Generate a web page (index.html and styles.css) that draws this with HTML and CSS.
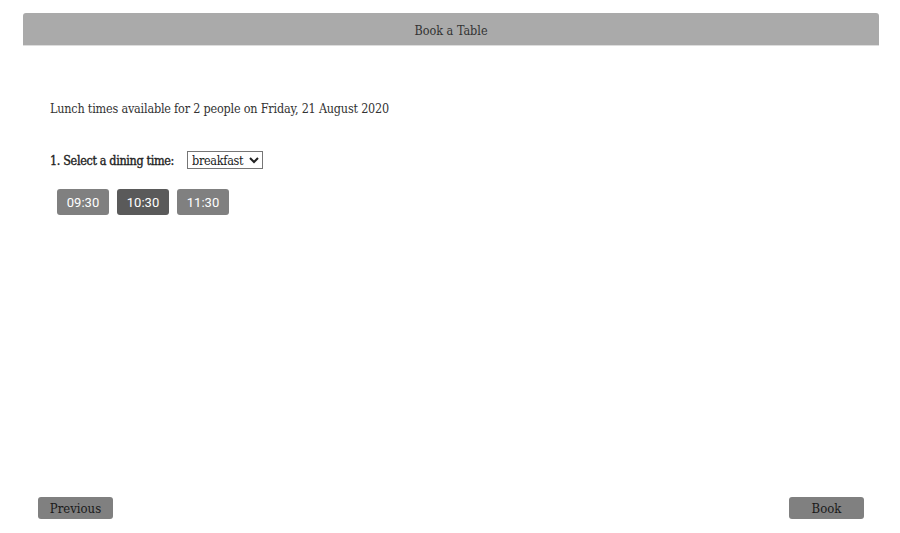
FILE: index.html
```html
<!DOCTYPE html>
<html>
<head>
<meta charset="utf-8">
<link rel="stylesheet" href="styles.css">
</head>
<body>
<div class="page">
  <div class="header">Book a Table</div>
  <div class="content">
    <p class="intro">Lunch times available for 2 people on Friday, 21 August 2020</p>
    <div class="select-row">
      <label class="label">1. Select a dining time:</label>
      <select class="meal"><option>breakfast</option></select>
    </div>
    <div class="times">
      <button class="time">09:30</button>
      <button class="time active">10:30</button>
      <button class="time">11:30</button>
    </div>
  </div>
  <div class="footer">
    <button class="nav">Previous</button>
    <button class="nav">Book</button>
  </div>
</div>
</body>
</html>
```
FILE: styles.css
```css
html, body { margin: 0; padding: 0; background: #fff; }
body {
  font-family: "DejaVu Serif", serif;
  font-stretch: condensed;
  color: #333;
}
.page {
  width: 856px;
  height: 520px;
  margin: 13px 0 0 23px;
  display: flex;
  flex-direction: column;
}
.header {
  height: 31px;
  padding-top: 1px;
  line-height: 33px;
  background: #aaa;
  border-bottom: 1px solid #ddd;
  border-radius: 3px 3px 0 0;
  text-align: center;
  font-size: 12.5px;
  color: #333;
}
.content {
  flex: 1;
  padding: 0 0 0 27px;
}
.intro {
  margin: 55px 0 0 0;
  font-size: 12.5px;
  letter-spacing: -0.2px;
  line-height: 16px;
}
.select-row {
  display: flex;
  align-items: center;
  margin-top: 34px;
}
.label {
  font-size: 12.5px;
  font-weight: normal;
  letter-spacing: -0.35px;
  -webkit-text-stroke: 0.35px #222;
  color: #222;
  margin-right: 13px;
}
.meal {
  font-family: "DejaVu Serif", serif;
  font-stretch: condensed;
  font-size: 12.5px;
  letter-spacing: -0.3px;
  width: 76px;
  height: 18px;
  padding: 0;
  border: 1px solid #767676;
  border-radius: 0;
  background: #fff;
  color: #222;
}
.times {
  display: flex;
  gap: 8px;
  margin: 20px 0 0 7px;
}
.time {
  width: 52px;
  height: 26px;
  border: none;
  border-radius: 3px;
  background: #808080;
  color: #fff;
  font-family: Roboto, sans-serif;
  font-size: 13px;
  padding: 0;
}
.time.active { background: #5a5a5a; }
.footer {
  display: flex;
  justify-content: space-between;
  padding: 0 15px 0 15px;
  margin-bottom: 14px;
}
.nav {
  width: 75px;
  height: 22px;
  border: none;
  border-radius: 3px;
  background: #808080;
  color: #1a1a1a;
  font-family: "DejaVu Serif", serif;
  font-stretch: condensed;
  font-size: 13px;
  padding: 0;
}
```
